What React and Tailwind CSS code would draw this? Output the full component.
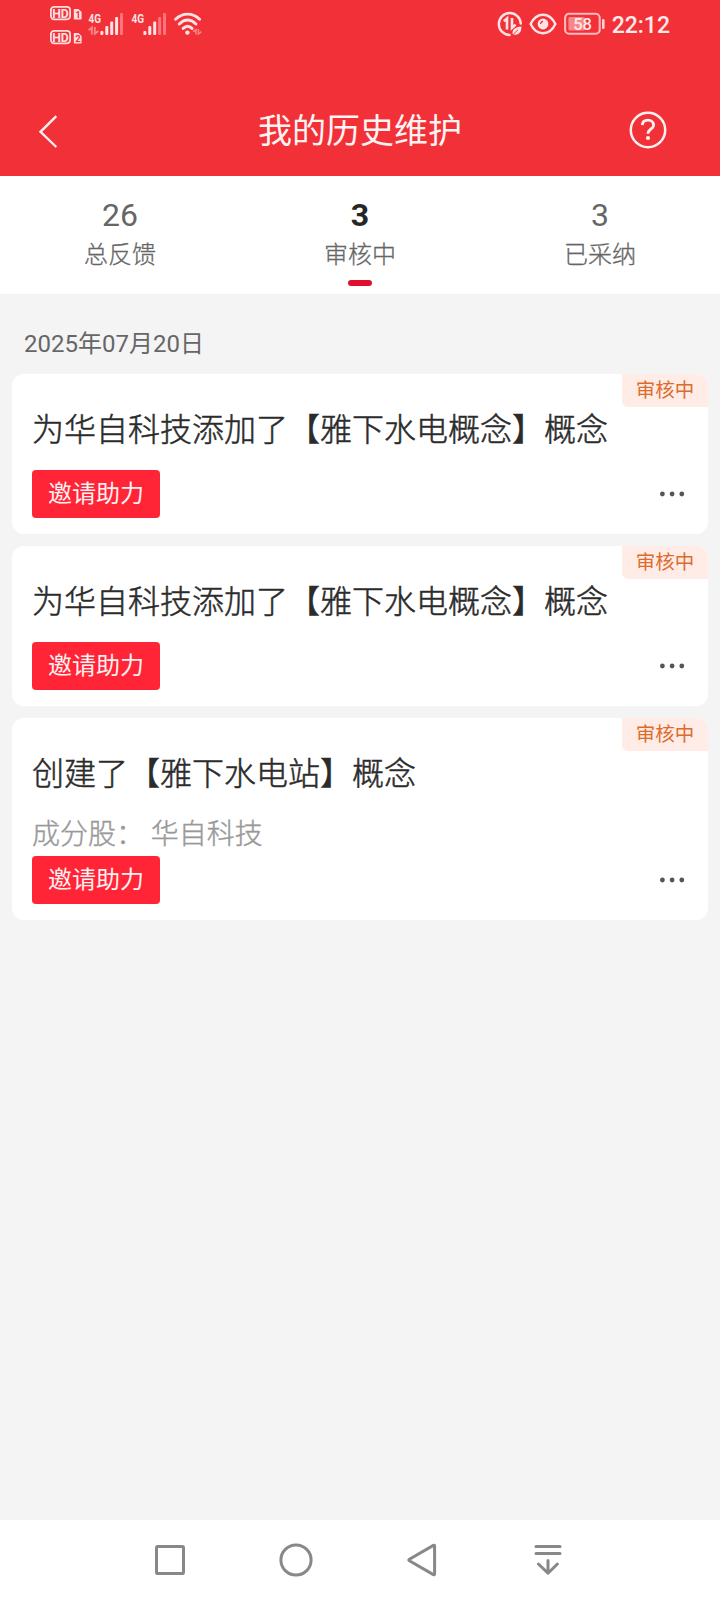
// HistoryMaintenance page
import React, { useState } from 'react'

const TABS = [
  { key: 'all',      label: '总反馈', count: 26 },
  { key: 'pending',  label: '审核中', count: 3 },
  { key: 'accepted', label: '已采纳', count: 3 },
]

const RECORDS = [
  { id: 1, title: '为华自科技添加了【雅下水电概念】概念', status: '审核中' },
  { id: 2, title: '为华自科技添加了【雅下水电概念】概念', status: '审核中' },
  { id: 3, title: '创建了【雅下水电站】概念', stocks: '华自科技', status: '审核中' },
]

const HdBadge = ({ sim }) => (
  <svg width="32" height="16" viewBox="0 0 32 16" fill="#ffe3e4" fontFamily="Roboto, sans-serif">
    <rect x="0.9" y="1.9" width="19.2" height="12.4" rx="3.2" fill="none" stroke="#ffdcde" strokeWidth="1.8" />
    <text x="2.2" y="12.8" fontSize="13" fontWeight="700" textLength="16.6" lengthAdjust="spacingAndGlyphs">HD</text>
    <path d="M24.4 4.6h3.8l2.8 2.6v6.6h-6.6z" stroke="#ffdcde" strokeWidth="1.2" strokeLinejoin="round" />
    <text x="25.2" y="12.8" fontSize="9.5" fontWeight="700" fill="#f23037">{sim}</text>
  </svg>
)

const DataArrows = () => (
  <path d="M0.2 3.6 3.4 0.9V8M6.4 0.4V7.2L9.8 4.4" fill="none" stroke="#f9868a" strokeWidth="1.9" />
)

const Signal = ({ strength, data }) => (
  <svg width="36" height="32" viewBox="0 -6 36 32" fill="#ffe3e4" fontFamily="Roboto, sans-serif">
    <text x="0.5" y="10.6" fontSize="13.5" fontWeight="700" textLength="12.5" lengthAdjust="spacingAndGlyphs">4G</text>
    {data && <g transform="translate(0.4 14.6)"><DataArrows /></g>}
    {[4, 9, 13.5, 18, 22].map((h, i) => (
      <rect key={h} x={12.4 + i * 4.9} y={23 - h} width="3" height={h} rx="1"
            fill={i < strength ? '#ffe3e4' : '#f87579'} />
    ))}
  </svg>
)

const Wifi = () => (
  <svg width="30" height="24" viewBox="0 0 30 24" fill="none" stroke="#ffe3e4" strokeWidth="2.9" strokeLinecap="round">
    <path d="M1.6 7.2C8.6 0.4 18.6 0.4 25.6 7.2M5.3 12C10.6 7 16.6 7 21.9 12M9.2 16.4C11.9 13.8 15.3 13.8 18 16.4" />
    <circle cx="13.4" cy="20.6" r="2.2" fill="#ffe3e4" stroke="none" />
    <path d="M19 19.6 22 17.6V22.4M24.4 17V22L27.4 19.6" stroke="#f9868a" strokeWidth="1.5" strokeLinecap="butt" />
  </svg>
)

const DataSaver = () => (
  <svg width="26" height="26" viewBox="0 0 26 26" fill="none" stroke="#ffe3e4" strokeWidth="2.4">
    <path d="M12.6 24A11 11 0 1 1 23.8 12.6" strokeLinecap="round" />
    <path d="M6.8 10.2 10 7.6V18.4M15 7V16.8L18.6 13.6" strokeWidth="2.6" />
    <path d="M15.6 23.2C15 18.4 17.8 16.4 24.4 15.6C24.6 21.4 21.4 25.2 15.6 23.2Z" fill="#ffe3e4" stroke="none" />
    <path d="M14.6 25 21 18.8" stroke="#f23037" strokeWidth="0.9" />
  </svg>
)

const Eye = () => (
  <svg width="28" height="22" viewBox="0 0 28 22" fill="none" stroke="#ffe3e4" strokeWidth="2.4">
    <path d="M1.6 11C7.5-1.4 20.5-1.4 26.4 11C20.5 23.4 7.5 23.4 1.6 11Z" strokeLinejoin="round" />
    <circle cx="14" cy="11" r="5.4" fill="#ffe3e4" stroke="none" />
    <path d="M11.6 11A2.8 2.8 0 0 1 14 8.4" stroke="#f23037" strokeWidth="1.2" />
  </svg>
)

const Battery = ({ level }) => (
  <svg width="42" height="24" viewBox="0 0 42 24" fontFamily="Roboto, sans-serif">
    <rect x="1.1" y="1.8" width="34.6" height="20" rx="4" fill="none" stroke="#fdb9bc" strokeWidth="2.1" />
    <rect x="4.4" y="5" width="16.5" height="13.6" rx="1.5" fill="#f8878b" />
    <rect x="38" y="7" width="2.6" height="10" rx="1" fill="#ffd0d2" />
    <text x="18.6" y="17.6" fontSize="16.5" fontWeight="500" fill="#ffe9ea" textAnchor="middle">{level}</text>
  </svg>
)

const StatusBar = () => (
  <div className="h-12 flex items-start justify-between pl-[50px] pr-[50px]">
    <div className="flex items-start">
      <div className="flex flex-col gap-2 pt-[5px]">
        <HdBadge sim="1" />
        <HdBadge sim="2" />
      </div>
      <div className="flex pl-[6px] pt-1.5">
        <Signal strength={4} data />
        <div className="pl-[7px]"><Signal strength={3} /></div>
      </div>
      <div className="pl-[7px] pt-3"><Wifi /></div>
    </div>
    <div className="h-12 flex items-center">
      <DataSaver />
      <div className="pl-[6px]"><Eye /></div>
      <div className="pl-[7px]"><Battery level={58} /></div>
      <span className="pl-[6px] pt-[3px] text-[23px] leading-none font-medium text-[#ffe9ea]">22:12</span>
    </div>
  </div>
)

const Header = () => (
  <header className="h-44 bg-[#f23037]">
    <StatusBar />
    <div className="h-32 pt-[59px] px-9 flex items-start justify-between">
      <button className="w-[55px] h-12 flex items-center">
        <svg width="24" height="34" viewBox="0 0 24 34" fill="none" stroke="#fff0f0" strokeWidth="2.4">
          <path d="M20.3 2.2 4.5 17.8 20.3 33" />
        </svg>
      </button>
      <h1 className="text-[34px] leading-[48px] text-[#fff3f3]">我的历史维护</h1>
      <button className="w-[55px] h-[46px] flex items-center">
        <svg width="38" height="38" viewBox="0 0 38 38" fill="none" stroke="#fff0f0" strokeWidth="2.5">
          <circle cx="19" cy="19" r="17.2" />
          <path d="M13.2 14.2C13.4 10.8 15.9 9.1 19 9.1C22.2 9.1 24.6 11.1 24.6 14.2C24.6 18 19 18 19 22.8" strokeWidth="2.8" />
          <circle cx="19" cy="27" r="2.1" fill="#fff0f0" stroke="none" />
        </svg>
      </button>
    </div>
  </header>
)

const RecordCard = ({ record }) => (
  <article className="relative bg-white rounded-xl overflow-hidden px-5 pt-8 pb-4">
    <span className="absolute top-0 right-0 w-[86px] h-[33px] rounded-bl-md bg-[#ffece6] text-center text-[19.5px] leading-[34px] text-[#dd6b2c]">
      {record.status}
    </span>
    <h2 className="h-16 text-[32px] leading-[48px] font-light text-[#2b2b2b] [-webkit-text-stroke:0.5px_#2b2b2b]">{record.title}</h2>
    {record.stocks && (
      <p className="h-[42px] text-[28px] leading-[42px] font-light text-[#999999] [-webkit-text-stroke:0.4px_#999999]">成分股： {record.stocks}</p>
    )}
    <div className="flex items-center justify-between">
      <button className="w-32 h-12 rounded bg-[#ff2436] text-2xl leading-[46px] text-[#fff0f1]">邀请助力</button>
      <svg width="28" height="8" viewBox="0 0 28 8" fill="#555555">
        <circle cx="2.4" cy="4" r="2.4" />
        <circle cx="12.1" cy="4" r="2.4" />
        <circle cx="21.8" cy="4" r="2.4" />
      </svg>
    </div>
  </article>
)

const SystemNav = () => (
  <nav className="h-20 bg-white flex items-center justify-center gap-[86px] pr-0.5">
    <svg width="40" height="40" viewBox="0 0 40 40" fill="none" stroke="#888888" strokeWidth="3">
      <rect x="6.5" y="6.5" width="27" height="27" rx="1.3" />
    </svg>
    <svg width="40" height="40" viewBox="0 0 40 40" fill="none" stroke="#888888" strokeWidth="3">
      <circle cx="20" cy="20" r="15.1" />
    </svg>
    <svg width="40" height="40" viewBox="0 0 40 40" fill="none" stroke="#888888" strokeWidth="3" strokeLinejoin="round">
      <path d="M7.4 19.2Q6.2 20 7.4 20.8L31.4 34.6Q32.6 35.1 32.6 33.8V6.2Q32.6 4.9 31.4 5.4Z" />
    </svg>
    <svg width="40" height="40" viewBox="0 0 40 40" fill="none" stroke="#888888" strokeWidth="3" strokeLinecap="round">
      <path d="M8 6.5H32M8 13.5H32M20 20.5V33M10.4 24 20 33.2 29.4 24" strokeLinejoin="round" />
    </svg>
  </nav>
)

export default function App() {
  const [active, setActive] = useState('pending')

  return (
    <div className="w-[720px] h-[1600px] flex flex-col bg-[#f4f4f4] font-[Roboto,'Noto_Sans_CJK_SC',sans-serif]">
      <Header />

      {/* Tabs */}
      <div className="h-[118px] bg-white grid grid-cols-3">
        {TABS.map(t => (
          <button key={t.key} onClick={() => setActive(t.key)} className="flex flex-col items-center pt-5">
            <span className={t.key === active ? 'text-[32px] leading-[38px] font-bold text-[#262626]' : 'text-[32px] leading-[38px] text-[#666666]'}>
              {t.count}
            </span>
            <span className="h-[46px] text-2xl leading-[42px] font-light text-[#666666] [-webkit-text-stroke:0.3px_#666666]">{t.label}</span>
            {t.key === active && <span className="w-6 h-1.5 rounded-full bg-[#e30e2d]" />}
          </button>
        ))}
      </div>

      <main className="flex-1 px-3">
        <p className="h-20 pt-8 pl-3 text-2xl leading-9 text-[#666666]">2025年07月20日</p>
        <div className="flex flex-col gap-3">
          {RECORDS.map(r => <RecordCard key={r.id} record={r} />)}
        </div>
      </main>

      <SystemNav />
    </div>
  )
}
